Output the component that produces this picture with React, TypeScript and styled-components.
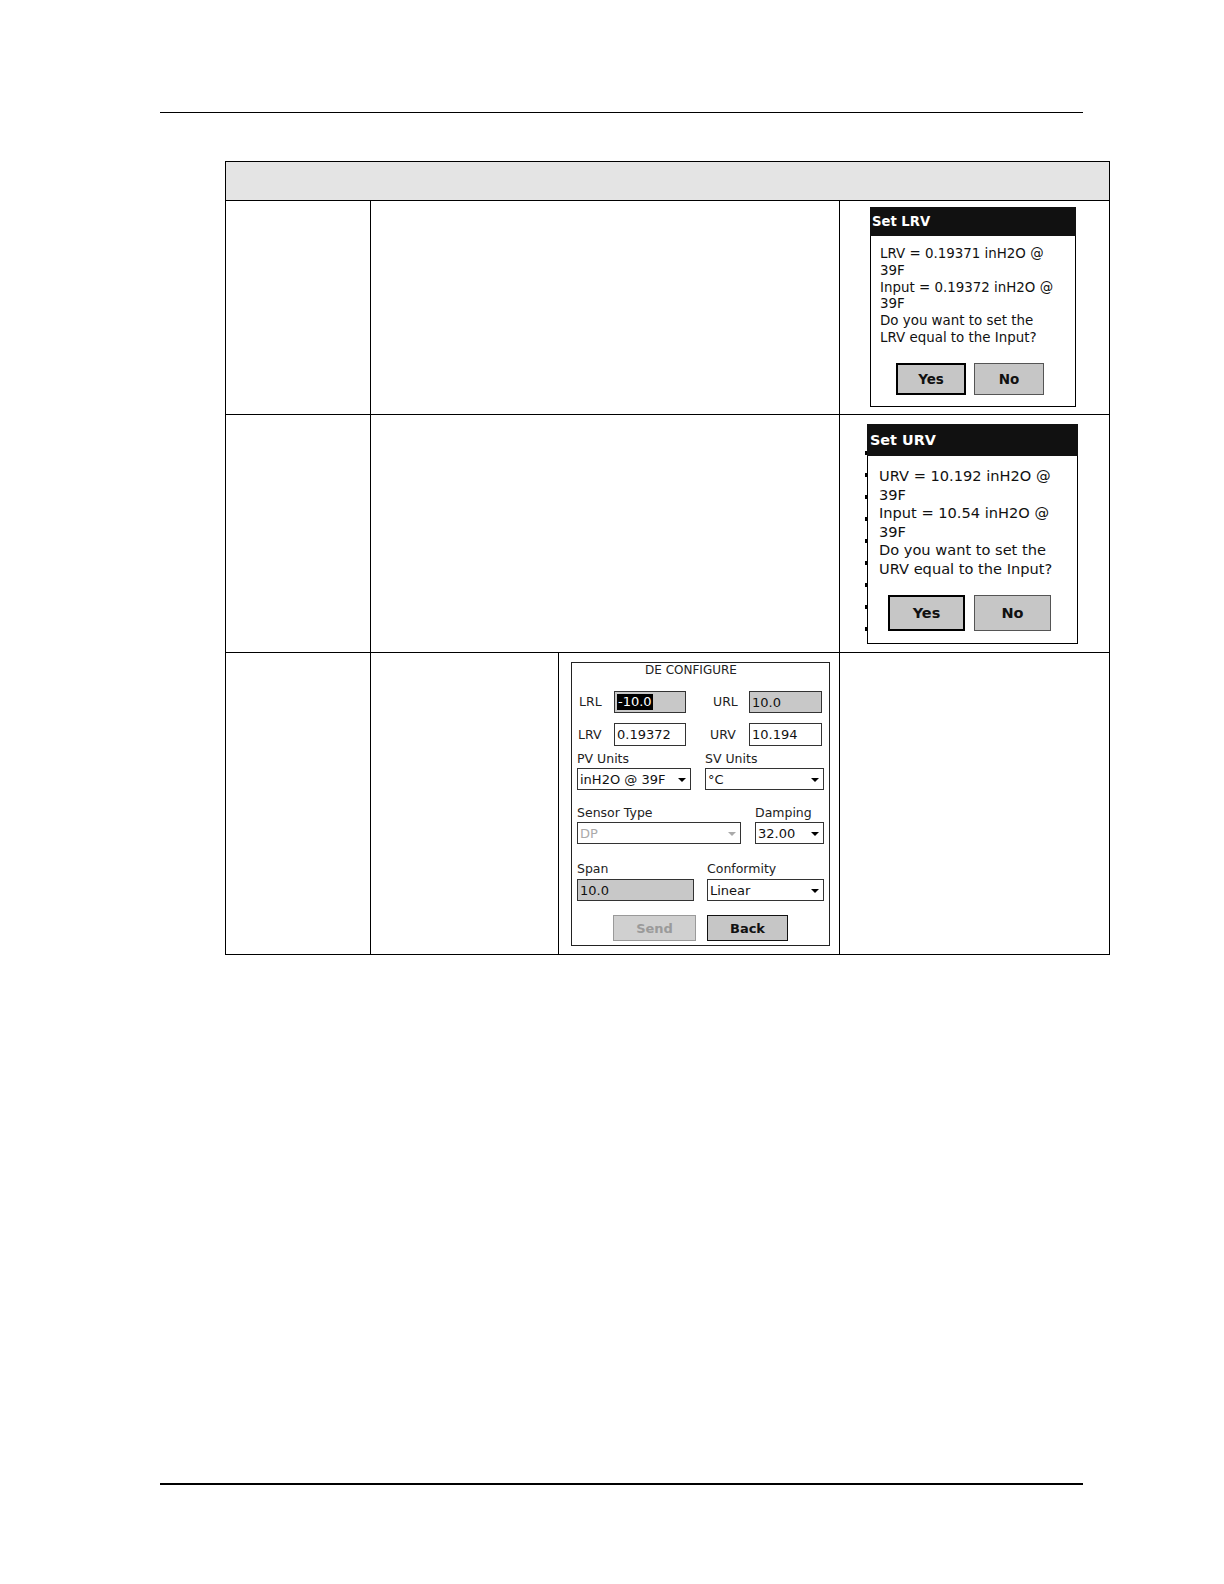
import React from "react";
import styled, { createGlobalStyle, css } from "styled-components";

const GlobalStyle = createGlobalStyle`
  html, body { margin: 0; padding: 0; background: #fff; }
  * { box-sizing: border-box; }
`;

const FONT = `"DejaVu Sans", Verdana, sans-serif`;

const Page = styled.div`
  width: 1224px;
  height: 1584px;
  display: flex;
  flex-direction: column;
  padding-bottom: 99px;
  font-family: ${FONT};
  color: #000;
`;

const Rule = styled.div<{ $thick?: boolean; $top?: number }>`
  margin-left: 160px;
  margin-top: ${(p) => (p.$top !== undefined ? `${p.$top}px` : "auto")};
  width: 923px;
  height: ${(p) => (p.$thick ? 2 : 1)}px;
  background: #000;
  flex: none;
`;

const Table = styled.div`
  margin: 48px 0 0 225px;
  width: 885px;
  display: grid;
  grid-template-columns: 144px 187px 280px 269px;
  grid-template-rows: 38px 213px 237px 301px;
  gap: 1px;
  padding: 1px;
  background: #000;
  flex: none;
`;

const Cell = styled.div<{ $span?: number; $head?: boolean; $padX?: number; $padY?: number }>`
  background: ${(p) => (p.$head ? "#e4e4e4" : "#fff")};
  ${(p) => p.$span && css`grid-column: span ${p.$span};`}
  padding: ${(p) => p.$padY ?? 0}px 0 0 ${(p) => p.$padX ?? 0}px;
  position: relative;
`;

/* ---------- Message dialogs ---------- */

const Dialog = styled.div<{ $w: number; $h: number }>`
  width: ${(p) => p.$w}px;
  height: ${(p) => p.$h}px;
  border: 1px solid #000;
  background: #fff;
  display: flex;
  flex-direction: column;
  position: relative;
`;

const Ticks = styled.div`
  position: absolute;
  left: -3px;
  top: 26px;
  bottom: 4px;
  width: 2px;
  background: repeating-linear-gradient(
    to bottom,
    #000 0 4px,
    transparent 4px 22px
  );
`;

const TitleBar = styled.div<{ $h: number; $size: number; $pad: number }>`
  height: ${(p) => p.$h}px;
  margin: -1px -1px 0 -1px;
  background: #111;
  color: #fff;
  font-weight: bold;
  font-size: ${(p) => p.$size}px;
  line-height: ${(p) => p.$h}px;
  padding-left: ${(p) => p.$pad}px;
  flex: none;
`;

const Message = styled.div<{ $size: number; $lh: number; $padTop: number; $padLeft: number }>`
  font-size: ${(p) => p.$size}px;
  line-height: ${(p) => p.$lh}px;
  padding: ${(p) => p.$padTop}px 0 0 ${(p) => p.$padLeft}px;
  white-space: nowrap;
  color: #111;
`;

const ButtonRow = styled.div<{ $top: number; $left: number; $gap: number }>`
  display: flex;
  gap: ${(p) => p.$gap}px;
  margin: ${(p) => p.$top}px 0 0 ${(p) => p.$left}px;
`;

const DlgButton = styled.div<{ $w: number; $h: number; $default?: boolean; $size: number }>`
  width: ${(p) => p.$w}px;
  height: ${(p) => p.$h}px;
  background: #c6c6c6;
  border: ${(p) => (p.$default ? "2px solid #000" : "1px solid #555")};
  display: flex;
  align-items: center;
  justify-content: center;
  font-weight: bold;
  font-size: ${(p) => p.$size}px;
  color: #111;
`;

/* ---------- DE CONFIGURE panel ---------- */

const Panel = styled.div`
  width: 259px;
  height: 284px;
  border: 1px solid #222;
  padding-left: 5px;
  display: flex;
  flex-direction: column;
  font-size: 12.5px;
  color: #222;
`;

const PanelTitle = styled.div`
  height: 14px;
  line-height: 14px;
  font-size: 12px;
  padding-left: 68px;
  white-space: nowrap;
`;

const Row = styled.div<{ $top: number; $h: number }>`
  display: flex;
  align-items: center;
  margin-top: ${(p) => p.$top}px;
  height: ${(p) => p.$h}px;
  flex: none;
`;

const Label = styled.div<{ $w: number; $pad?: number }>`
  width: ${(p) => p.$w}px;
  padding-left: ${(p) => p.$pad ?? 0}px;
  white-space: nowrap;
  flex: none;
  line-height: 14px;
`;

const Field = styled.div<{ $w: number; $gray?: boolean; $disabled?: boolean; $ml?: number }>`
  width: ${(p) => p.$w}px;
  height: 100%;
  margin-left: ${(p) => p.$ml ?? 0}px;
  border: 1px solid #333;
  background: ${(p) => (p.$gray ? "#c8c8c8" : "#fff")};
  color: ${(p) => (p.$disabled ? "#aaa" : "#111")};
  font-size: 13px;
  padding-left: 2px;
  display: flex;
  align-items: center;
  position: relative;
  white-space: nowrap;
  flex: none;
`;

const Arrow = styled.span<{ $disabled?: boolean }>`
  position: absolute;
  right: 4px;
  top: 50%;
  margin-top: -1px;
  width: 0;
  height: 0;
  border-left: 4px solid transparent;
  border-right: 4px solid transparent;
  border-top: 4px solid ${(p) => (p.$disabled ? "#aaa" : "#000")};
`;

const Selected = styled.span`
  background: #000;
  color: #fff;
  padding: 0 1px;
  line-height: 16px;
`;

const PanelButton = styled.div<{ $w: number; $ml: number; $disabled?: boolean }>`
  width: ${(p) => p.$w}px;
  height: 100%;
  margin-left: ${(p) => p.$ml}px;
  background: ${(p) => (p.$disabled ? "#d0d0d0" : "#c6c6c6")};
  border: 1px solid ${(p) => (p.$disabled ? "#9a9a9a" : "#111")};
  color: ${(p) => (p.$disabled ? "#9a9a9a" : "#111")};
  font-weight: bold;
  font-size: 13px;
  display: flex;
  align-items: center;
  justify-content: center;
  flex: none;
`;

type DlgProps = {
  title: string;
  lines: string[];
  big?: boolean;
};

const MessageDialog: React.FC<DlgProps> = ({ title, lines, big }) =>
  big ? (
    <Dialog $w={211} $h={220}>
      <Ticks />
      <TitleBar $h={32} $size={14.4} $pad={3}>
        {title}
      </TitleBar>
      <Message $size={14.6} $lh={18.5} $padTop={11} $padLeft={11}>
        {lines.map((l, i) => (
          <div key={i}>{l}</div>
        ))}
      </Message>
      <ButtonRow $top={17} $left={20} $gap={9}>
        <DlgButton $w={77} $h={36} $default $size={14.5}>
          Yes
        </DlgButton>
        <DlgButton $w={77} $h={36} $size={14.5}>
          No
        </DlgButton>
      </ButtonRow>
    </Dialog>
  ) : (
    <Dialog $w={206} $h={200}>
      <TitleBar $h={29} $size={13.2} $pad={2}>
        {title}
      </TitleBar>
      <Message $size={13.4} $lh={16.8} $padTop={10} $padLeft={9}>
        {lines.map((l, i) => (
          <div key={i}>{l}</div>
        ))}
      </Message>
      <ButtonRow $top={16} $left={25} $gap={8}>
        <DlgButton $w={70} $h={32} $default $size={13.5}>
          Yes
        </DlgButton>
        <DlgButton $w={70} $h={32} $size={13.5}>
          No
        </DlgButton>
      </ButtonRow>
    </Dialog>
  );

const ConfigPanel: React.FC = () => (
  <Panel>
    <PanelTitle>DE CONFIGURE</PanelTitle>
    <Row $top={14} $h={22}>
      <Label $w={37} $pad={2}>LRL</Label>
      <Field $w={72} $gray>
        <Selected>-10.0</Selected>
      </Field>
      <Label $w={63} $pad={27}>URL</Label>
      <Field $w={73} $gray>10.0</Field>
    </Row>
    <Row $top={10} $h={23}>
      <Label $w={37} $pad={1}>LRV</Label>
      <Field $w={72}>0.19372</Field>
      <Label $w={63} $pad={24}>URV</Label>
      <Field $w={73}>10.194</Field>
    </Row>
    <Row $top={6} $h={14}>
      <Label $w={128}>PV Units</Label>
      <Label $w={100}>SV Units</Label>
    </Row>
    <Row $top={2} $h={22}>
      <Field $w={114}>
        inH2O @ 39F
        <Arrow />
      </Field>
      <Field $w={119} $ml={14}>
        °C
        <Arrow />
      </Field>
    </Row>
    <Row $top={16} $h={14}>
      <Label $w={178}>Sensor Type</Label>
      <Label $w={70}>Damping</Label>
    </Row>
    <Row $top={2} $h={22}>
      <Field $w={164} $disabled>
        DP
        <Arrow $disabled />
      </Field>
      <Field $w={69} $ml={14}>
        32.00
        <Arrow />
      </Field>
    </Row>
    <Row $top={18} $h={14}>
      <Label $w={130}>Span</Label>
      <Label $w={100}>Conformity</Label>
    </Row>
    <Row $top={3} $h={22}>
      <Field $w={117} $gray>10.0</Field>
      <Field $w={117} $ml={13}>
        Linear
        <Arrow />
      </Field>
    </Row>
    <Row $top={14} $h={26}>
      <PanelButton $w={83} $ml={36} $disabled>
        Send
      </PanelButton>
      <PanelButton $w={81} $ml={11}>
        Back
      </PanelButton>
    </Row>
  </Panel>
);

export default function App() {
  return (
    <>
      <GlobalStyle />
      <Page>
        <Rule $top={112} />
        <Table>
          <Cell $span={4} $head />
          <Cell />
          <Cell $span={2} />
          <Cell $padX={30} $padY={6}>
            <MessageDialog
              title="Set LRV"
              lines={[
                "LRV = 0.19371 inH2O @",
                "39F",
                "Input = 0.19372 inH2O @",
                "39F",
                "Do you want to set the",
                "LRV equal to the Input?",
              ]}
            />
          </Cell>
          <Cell />
          <Cell $span={2} />
          <Cell $padX={27} $padY={9}>
            <MessageDialog
              big
              title="Set URV"
              lines={[
                "URV = 10.192 inH2O @",
                "39F",
                "Input = 10.54 inH2O @",
                "39F",
                "Do you want to set the",
                "URV equal to the Input?",
              ]}
            />
          </Cell>
          <Cell />
          <Cell />
          <Cell $padX={12} $padY={9}>
            <ConfigPanel />
          </Cell>
          <Cell />
        </Table>
        <Rule $thick />
      </Page>
    </>
  );
}
